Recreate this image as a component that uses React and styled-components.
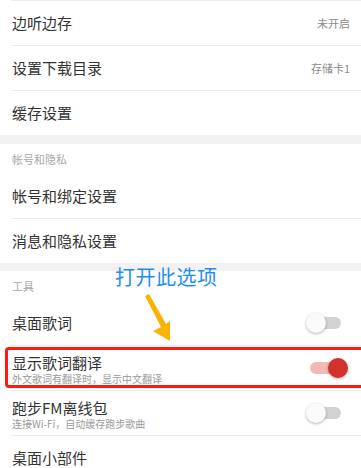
import React from "react";
import styled, { createGlobalStyle } from "styled-components";

const GlobalStyle = createGlobalStyle`
  html, body {
    margin: 0;
    padding: 0;
    background: #ffffff;
  }
  body {
    font-family: "Noto Sans CJK SC", "Noto Sans", "Liberation Sans", sans-serif;
    -webkit-font-smoothing: antialiased;
  }
`;

const Page = styled.div`
  position: relative;
  width: 361px;
  height: 468px;
  overflow: hidden;
  background: #ffffff;
`;

const Band = styled.div`
  height: ${(p) => p.h || 9}px;
  background: #f2f2f2;
`;

const Header = styled.div`
  height: 30px;
  display: flex;
  align-items: center;
  padding-left: 12px;
  font-size: 11px;
  color: #a8a8a8;
`;

const Row = styled.div`
  position: relative;
  display: flex;
  align-items: center;
  justify-content: space-between;
  height: 44px;
  margin-left: 11px;
  padding: 0 11px 0 1px;
  border-top: ${(p) => (p.divider ? "1px solid #ececec" : "none")};
`;

const TextBlock = styled.div`
  display: flex;
  flex-direction: column;
  padding-top: 2px;
`;

const Title = styled.div`
  font-size: 15px;
  line-height: 18px;
  color: #333333;
`;

const Sub = styled.div`
  font-size: 10px;
  line-height: 13px;
  color: #9a9a9a;
`;

const Value = styled.div`
  font-size: 11px;
  color: #8c8c8c;
`;

const Switch = styled.div`
  position: relative;
  width: 42px;
  height: 20px;
  margin-right: 2px;
`;

const Track = styled.div`
  position: absolute;
  left: 4px;
  top: 4px;
  width: 31px;
  height: 12px;
  border-radius: 6px;
  background: ${(p) => (p.on ? "#f3b9b7" : "#d2d2d2")};
`;

const Knob = styled.div`
  position: absolute;
  top: 0;
  left: ${(p) => (p.on ? "22px" : "0")};
  width: 20px;
  height: 20px;
  border-radius: 50%;
  background: ${(p) => (p.on ? "#d2322d" : "#fafafa")};
  box-shadow: 0 1px 3px rgba(0, 0, 0, 0.3);
`;

const Highlight = styled.div`
  position: absolute;
  left: -6px;
  right: -10px;
  top: 1px;
  bottom: 2px;
  border: 3px solid #ff1a0f;
  border-radius: 4px;
  pointer-events: none;
`;

const Note = styled.div`
  position: absolute;
  left: 115px;
  top: 265px;
  font-size: 20px;
  line-height: 24px;
  color: #1f8ef2;
  letter-spacing: 0.5px;
`;

const Arrow = styled.svg`
  position: absolute;
  left: 140px;
  top: 288px;
`;

const Toggle = ({ on }) => (
  <Switch>
    <Track on={on ? 1 : 0} />
    <Knob on={on ? 1 : 0} />
  </Switch>
);

const App = () => {
  return (
    <Page>
      <GlobalStyle />
      <Row divider>
        <Title>边听边存</Title>
        <Value>未开启</Value>
      </Row>
      <Row divider>
        <Title>设置下载目录</Title>
        <Value>存储卡1</Value>
      </Row>
      <Row divider>
        <Title>缓存设置</Title>
      </Row>
      <Band h={9} />
      <Header>帐号和隐私</Header>
      <Row>
        <Title>帐号和绑定设置</Title>
      </Row>
      <Row divider>
        <Title>消息和隐私设置</Title>
      </Row>
      <Band h={8} />
      <Header>工具</Header>
      <Row>
        <Title>桌面歌词</Title>
        <Toggle />
      </Row>
      <Row divider>
        <TextBlock>
          <Title>显示歌词翻译</Title>
          <Sub>外文歌词有翻译时，显示中文翻译</Sub>
        </TextBlock>
        <Toggle on />
        <Highlight />
      </Row>
      <Row divider>
        <TextBlock>
          <Title>跑步FM离线包</Title>
          <Sub>连接Wi-Fi，自动缓存跑步歌曲</Sub>
        </TextBlock>
        <Toggle />
      </Row>
      <Row divider>
        <Title>桌面小部件</Title>
      </Row>

      <Note>打开此选项</Note>
      <Arrow width="40" height="56" viewBox="0 0 40 56">
        <polygon
          points="5,8 9,6 26,36 30,33 30,53 13,43 21,39"
          fill="#f9b300"
        />
      </Arrow>
    </Page>
  );
};

export default App;
